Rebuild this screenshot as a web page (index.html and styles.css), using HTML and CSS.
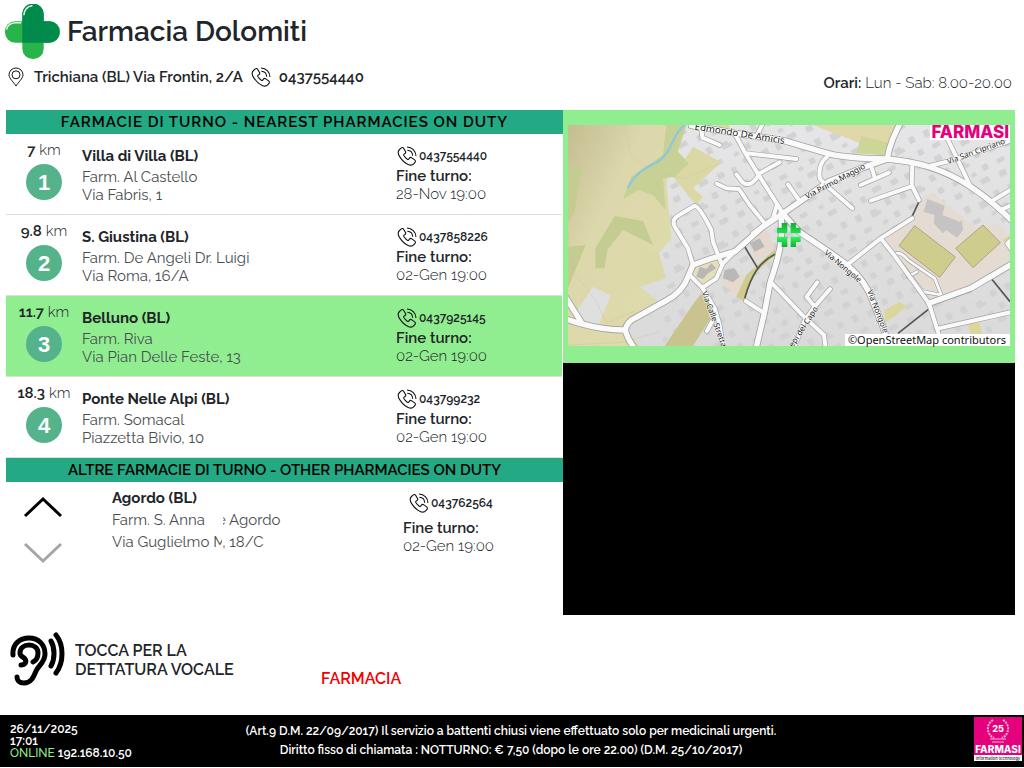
FILE: index.html
```html
<!DOCTYPE html>
<html lang="it">
<head>
    <meta charset="UTF-8">
    <meta name="viewport" content="width=device-width, initial-scale=1.0">
    <title>Farmacia Dolomiti</title>
    <link rel="stylesheet" href="styles.css">
</head>
<body>
    <!-- shared icons -->
    <svg class="sprite" aria-hidden="true">
        <symbol id="phone" viewBox="0 0 24 24">
            <path d="M5.2 2.2 L3 4.2 C.8 6.2 1 9.4 3.4 13 C6 17 9.6 20.6 13.4 22.2 C16.4 23.6 18.8 23 20.6 20.8 L21.6 19.6 C22.4 18.6 22.2 17.4 21.2 16.6 L17.8 14.2 C16.8 13.5 15.6 13.7 14.9 14.6 L14 15.8 C13.6 16.3 13 16.3 12.4 15.9 C10.6 14.6 9.2 13 8.2 11.3 C7.9 10.7 8 10.2 8.5 9.8 L9.6 9 C10.5 8.3 10.7 7.1 10 6.1 L7.9 2.8 C7.2 1.7 6 1.5 5.2 2.2 Z"/>
            <path d="M12 1.2 C18 1.4 22.6 5.8 22.8 12 M12.4 5.2 C16 5.4 18.6 8 18.8 11.6"/>
        </symbol>
    </svg>

    <header class="header">
        <div>
            <div class="brand">
                <svg class="brand-logo" viewBox="0 0 54 54" aria-hidden="true">
                    <rect x="0" y="17" width="54" height="21" rx="10" fill="#28b44b"/>
                    <rect x="17" y="0" width="21" height="54" rx="10" fill="#28b44b"/>
                    <path d="M17 38 V10 A10.5 10.5 0 0 1 38 10 V17 H43 A10.5 10.5 0 0 1 43 38 Z" fill="#008a4b"/>
                    <path d="M18.5 11 Q19 3 27 1.5 M1.5 25 Q3 19 10 18.5 H16" fill="none" stroke="#dff5e4" stroke-width="1.5"/>
                </svg>
                <h1>Farmacia Dolomiti</h1>
            </div>
            <div class="contacts">
                <svg class="pin" viewBox="0 0 16 20" aria-hidden="true">
                    <path d="M8 19 C6 15.5 1 11.5 1 7.8 A7 6.8 0 0 1 15 7.8 C15 11.5 10 15.5 8 19 Z"/>
                    <circle cx="8" cy="7.8" r="4"/>
                </svg>
                <span class="address">Trichiana (BL) Via Frontin, 2/A</span>
                <svg class="phone-icon" aria-hidden="true"><use href="#phone"/></svg>
                <a class="main-phone" href="tel:0437554440">0437554440</a>
            </div>
        </div>
        <p class="hours"><strong>Orari:</strong> Lun - Sab: 8.00-20.00</p>
    </header>

    <main class="board">
        <section class="duty">
            <h2 class="bar bar-wide">FARMACIE DI TURNO - NEAREST PHARMACIES ON DUTY</h2>
            <ol class="list">
                <li class="row">
                    <div class="distance"><span><b>7</b> km</span><span class="badge">1</span></div>
                    <div class="place">
                        <h3>Villa di Villa (BL)</h3>
                        <p>Farm. Al Castello</p>
                        <p>Via Fabris, 1</p>
                    </div>
                    <div class="shift">
                        <a class="phone" href="tel:0437554440"><svg class="phone-icon" aria-hidden="true"><use href="#phone"/></svg>0437554440</a>
                        <strong>Fine turno:</strong>
                        <span>28-Nov 19:00</span>
                    </div>
                </li>
                <li class="row">
                    <div class="distance"><span><b>9.8</b> km</span><span class="badge">2</span></div>
                    <div class="place">
                        <h3>S. Giustina (BL)</h3>
                        <p>Farm. De Angeli Dr. Luigi</p>
                        <p>Via Roma, 16/A</p>
                    </div>
                    <div class="shift">
                        <a class="phone" href="tel:0437858226"><svg class="phone-icon" aria-hidden="true"><use href="#phone"/></svg>0437858226</a>
                        <strong>Fine turno:</strong>
                        <span>02-Gen 19:00</span>
                    </div>
                </li>
                <li class="row selected">
                    <div class="distance"><span><b>11.7</b> km</span><span class="badge">3</span></div>
                    <div class="place">
                        <h3>Belluno (BL)</h3>
                        <p>Farm. Riva</p>
                        <p>Via Pian Delle Feste, 13</p>
                    </div>
                    <div class="shift">
                        <a class="phone" href="tel:0437925145"><svg class="phone-icon" aria-hidden="true"><use href="#phone"/></svg>0437925145</a>
                        <strong>Fine turno:</strong>
                        <span>02-Gen 19:00</span>
                    </div>
                </li>
                <li class="row">
                    <div class="distance"><span><b>18.3</b> km</span><span class="badge">4</span></div>
                    <div class="place">
                        <h3>Ponte Nelle Alpi (BL)</h3>
                        <p>Farm. Somacal</p>
                        <p>Piazzetta Bivio, 10</p>
                    </div>
                    <div class="shift">
                        <a class="phone" href="tel:043799232"><svg class="phone-icon" aria-hidden="true"><use href="#phone"/></svg>043799232</a>
                        <strong>Fine turno:</strong>
                        <span>02-Gen 19:00</span>
                    </div>
                </li>
            </ol>
            <h2 class="bar">ALTRE FARMACIE DI TURNO - OTHER PHARMACIES ON DUTY</h2>
            <div class="others">
                <div class="scroller">
                    <button type="button" aria-label="Precedente"><svg viewBox="0 0 40 22"><path d="M2 20 L20 3 L38 20"/></svg></button>
                    <button type="button" aria-label="Successiva" class="dim"><svg viewBox="0 0 40 22"><path d="M2 2 L20 19 L38 2"/></svg></button>
                </div>
                <div class="place">
                    <h3>Agordo (BL)</h3>
                    <p>Farm. S. Anna <span class="cut cut-start">e</span> Agordo</p>
                    <p>Via Guglielmo <span class="cut cut-end">M</span>, 18/C</p>
                </div>
                <div class="shift">
                    <a class="phone" href="tel:043762564"><svg class="phone-icon" aria-hidden="true"><use href="#phone"/></svg>043762564</a>
                    <strong>Fine turno:</strong>
                    <span>02-Gen 19:00</span>
                </div>
            </div>
        </section>

        <aside class="side">
            <div class="map">
                <svg class="map-view" viewBox="15 60 1326 663" role="img" aria-label="Mappa">
                    <defs>
                        <linearGradient id="hill" x1="0" y1="0" x2="1" y2="1">
                            <stop offset="0" stop-color="#c3bd90"/>
                            <stop offset=".35" stop-color="#dcd8ac"/>
                            <stop offset="1" stop-color="#dedbaa"/>
                        </linearGradient>
                        <linearGradient id="shade" x1="0" y1="0" x2="0" y2="1">
                            <stop offset="0" stop-color="#e6e5e7"/>
                            <stop offset="1" stop-color="#dadada"/>
                        </linearGradient>
                        <linearGradient id="cross" x1="0" y1="0" x2="0" y2="1">
                            <stop offset="0" stop-color="#0fae35"/>
                            <stop offset=".6" stop-color="#2bf457"/>
                            <stop offset="1" stop-color="#0fae35"/>
                        </linearGradient>
                        <pattern id="houses" width="150" height="130" patternUnits="userSpaceOnUse" patternTransform="rotate(-28)">
                            <path d="M8 10h22v18h-22z M54 14h16v20h-16z M98 6h28v16h-28z M14 56h18v22h-18z M62 64h22v10h8v12h-30z M116 54h18v20h-18z M20 104h24v14h-24z M82 108h16v12h-16z M122 100h18v18h-18z"/>
                        </pattern>
                        <g id="main-roads">
                            <path d="M385 62 L520 85 L663 107 L793 145 Q850 160 973 162 Q1050 170 1103 187 Q1170 210 1223 245 Q1290 290 1350 350"/>
                            <path d="M973 162 L903 187 L793 232 L725 280 L660 325 L600 365 L515 440"/>
                            <path d="M973 160 Q978 130 990 100 L1013 50"/>
                            <path d="M655 320 L708 380 L793 437 L853 480 Q910 530 930 590 L958 660 L980 730"/>
                            <path d="M655 325 L655 400 Q650 450 622 530 L605 620 L578 735"/>
                            <path d="M0 640 L50 655 Q120 675 187 675 Q190 650 220 637 L310 587 Q360 560 375 515 L390 480 L440 462 L515 440"/>
                            <path d="M187 675 Q192 700 215 730 M10 580 L55 652"/>
                            <path d="M1098 595 L1223 550 L1350 475"/>
                        </g>
                        <g id="small-roads">
                            <path d="M390 480 L375 430 L335 365 Q325 345 345 332 L395 302 Q410 305 445 375 L450 410 L475 475"/>
                            <path d="M380 510 L418 548 L460 520 L480 475 L515 440"/>
                            <path d="M418 548 L455 610 L470 660 L480 730 M455 635 L432 678"/>
                            <path d="M462 236 L490 250 L528 252 L560 300 L605 355"/>
                            <path d="M570 385 L630 340 L640 305"/>
                            <path d="M520 95 L550 150 L590 215 L660 325"/>
                            <path d="M550 145 L700 162 M650 172 L590 205 Q565 250 540 233 L520 208 M415 70 L418 98 L470 120 M585 85 L600 55"/>
                            <path d="M675 238 L708 285 M622 530 L720 632 L783 690 L788 730 M548 588 L600 622"/>
                            <path d="M1048 175 L1046 240 L1068 285 M923 287 L1043 245 M893 240 L978 203 M925 185 L935 218"/>
                            <path d="M793 155 Q765 175 770 220 L788 240 L868 310"/>
                            <path d="M858 475 L953 400 L1048 340 M953 400 L993 450 L1098 595 L1128 690 L1133 730"/>
                            <path d="M1128 670 L1350 620 M763 532 L731 575 L755 605 L801 552 M755 605 L723 650 L693 730"/>
                            <path d="M1103 182 L1160 168 L1350 105 M1153 100 L1223 245 M1283 290 L1350 250 M1310 316 L1350 298"/>
                            <path d="M1350 400 L1333 415 L1350 440"/>
                        </g>
                        <g id="lanes">
                            <path d="M993 448 Q1010 435 1035 465 L1115 520 L1135 570 L1080 560 L1010 470 M1035 515 L1062 500"/>
                        </g>
                    </defs>
                    <rect x="15" y="60" width="1326" height="663" fill="url(#shade)"/>
                    <rect x="300" y="60" width="1041" height="663" class="houses"/>
                    <path d="M15 60 H310 L345 140 L310 230 L325 400 L280 455 L230 545 L300 600 L190 670 L230 723 H15 Z" fill="url(#hill)"/>
                    <path d="M225 425 L290 450 L308 520 L230 545 Z" fill="#dcd9a9"/>
                    <path d="M90 545 L143 572 L105 665 L55 640 L40 620 Z" fill="#dfdfdf"/>
                    <path d="M390 125 L475 172 L390 250 L420 275 L400 300 L330 215 Z M500 60 L455 60 L495 80 Z" fill="#dbd8a6"/>
                    <path d="M310 60 L370 60 L345 140 L378 175 L335 215 L300 220 L308 315 L270 270 L225 255 L180 283 L205 215 L300 150 Z" fill="#c8d195"/>
                    <path d="M155 333 L240 348 L270 420 L180 375 L133 435 L125 490 L97 490 L97 430 Z M15 185 H55 L35 320 L15 350 Z M15 425 L68 420 L15 550 Z" fill="#c5cc92"/>
                    <path d="M185 62 L205 155 L270 200 L365 220 L470 175 M15 390 L30 500 L100 590 L130 655 L210 620 L270 635 M15 720 L180 712 L290 680" class="contour"/>
                    <path d="M305 723 L395 590 L420 560 L455 620 L390 723 Z" fill="#c9c390"/>
                    <path d="M365 60 C325 90 330 140 285 170 C245 190 215 205 194 250" class="stream"/>
                    <path d="M750 60 H1000 L963 150 L875 108 Z" fill="#dfd9a9"/>
                    <path d="M895 92 L980 115 L963 150 L880 145 Z" fill="#ccd697"/>
                    <path d="M388 490 L465 465 L475 510 L420 545 Z" fill="#e4e1b8"/>
                    <path d="M465 460 L500 450 L480 475 Z" fill="#cfca82"/>
                    <path d="M505 485 L545 515 L530 575 L475 535 Z M555 415 L610 370 L635 430 L580 470 Z" fill="#e5d9cf"/>
                    <path d="M520 575 L550 510 L590 475 L635 432 L638 450 L570 510 L545 590 Z" fill="#cfcb8a"/>
                    <path d="M1108 262 L1240 370 L1300 355 L1341 400 V470 L1225 548 L1110 585 L960 405 L1055 345 L1070 285 Z" fill="#e4dbd3"/>
                    <path d="M1055 362 L1177 456 L1130 517 L1008 422 Z M1260 360 L1312 413 L1230 488 L1178 430 Z" fill="#cfcd8d" stroke="#b5a184" stroke-width="3"/>
                    <path d="M1093 282 L1145 302 L1138 330 L1190 350 L1197 345 L1200 375 L1182 398 L1150 375 L1140 385 L1112 355 L1115 330 L1082 320 Z" fill="#c5c3c3"/>
                    <path d="M410 485 L430 492 L445 475 L460 490 L435 505 L420 522 L400 515 Z M485 495 L515 490 L530 515 L510 532 L480 520 Z M560 415 L590 400 L605 425 L575 440 Z" fill="#b9b8b7"/>
                    <path d="M965 615 L1010 590 L1030 605 L965 655 Z M1215 655 H1250 L1260 700 H1225 Z M1320 405 L1341 390 V430 Z" fill="#dbd69a"/>
                    <path d="M545 425 L583 488 M636 448 C590 470 565 510 545 580 M1068 290 L1047 335 M1005 685 L1100 610 M1283 518 L1341 590" class="track"/>
                    <use href="#lanes" class="lane-edge"/>
                    <use href="#lanes" class="lane"/>
                    <use href="#small-roads" class="small-edge"/>
                    <use href="#main-roads" class="main-edge"/>
                    <use href="#small-roads" class="small-road"/>
                    <use href="#main-roads" class="main-road"/>
                    <g class="street">
                        <text transform="translate(394 74) rotate(9)" class="street-large">Edmondo De Amicis</text>
                        <text transform="translate(732 283) rotate(-28)">Via Primo Maggio</text>
                        <text transform="translate(1156 178) rotate(-20)">Via San Cipriano</text>
                        <text transform="translate(782 446) rotate(40)">Via Nongole</text>
                        <text transform="translate(912 558) rotate(69)">Via Nongole</text>
                        <text transform="translate(416 562) rotate(70)">Via Calle Stretta</text>
                        <text transform="translate(690 728) rotate(-57)">epi del Capo</text>
                    </g>
                    <path d="M642 368 H656 V354 H673 V385 H642 Z M683 354 H699 V368 H713 V385 H683 Z M642 395 H673 V426 H656 V411 H642 Z M683 395 H713 V411 H699 V426 H683 Z" fill="url(#cross)"/>
                </svg>
                <span class="map-brand">FARMASI</span>
                <span class="credit">©OpenStreetMap contributors</span>
            </div>
            <div class="screen"></div>
        </aside>
    </main>

    <section class="tools">
        <button type="button" class="voice">
            <svg viewBox="0 0 56 56" aria-hidden="true">
                <path d="M3 23 C2 12 10 6 19 6 C29 6 35 13 35 22 C35 30 29 33 26 39 C23 46 21 51 14 51 C9 51 7 48 7 45"/>
                <path d="M23 30 C27 28 28 25 28 21 C28 16 24 13 19 13 C14 13 10 16 10 21 C10 25 13 24 15 27 C17 30 15 33 11 33"/>
                <path d="M41 9 C45 16 45 27 41 34 M46 3 C54 13 54 30 46 41"/>
            </svg>
            <span>TOCCA PER LA<br>DETTATURA VOCALE</span>
        </button>
        <p class="ticker">FARMACIA</p>
    </section>

    <footer class="footer">
        <p class="status">26/11/2025<br>17:01<br><span class="online">ONLINE</span> 192.168.10.50</p>
        <p class="notice">(Art.9 D.M. 22/09/2017) Il servizio a battenti chiusi viene effettuato solo per medicinali urgenti.<br>Diritto fisso di chiamata : NOTTURNO: € 7,50 (dopo le ore 22.00) (D.M. 25/10/2017)</p>
        <div class="maker">
            <svg viewBox="0 0 48 44" role="img" aria-label="Farmasi information technology">
                <rect width="48" height="38" fill="#e5007d"/>
                <rect y="38" width="48" height="6" fill="#fff"/>
                <path d="M19 3 C12 7 12 17 20 21 M29 3 C36 7 36 17 28 21" fill="none" stroke="#f7b5d8" stroke-width="2" stroke-dasharray="2 1"/>
                <path d="M16 22 H32 M18 25 H30" fill="none" stroke="#f7b5d8"/>
                <text x="24" y="15" class="years">25</text>
                <text x="24" y="36" class="maker-name">FARMASI</text>
                <text x="24" y="43" class="maker-sub">information technology</text>
            </svg>
        </div>
    </footer>
</body>
</html>
```

FILE: styles.css
```css
* {
    box-sizing: border-box;
}

body {
    font-family: Raleway, Lato, "Open Sans", sans-serif;
    font-size: 15px;
    line-height: 18px;
    color: #212529;
    background-color: #fff;
    margin: 0;
}

h1, h2, h3, p, ol {
    margin: 0;
    padding: 0;
}

h1, h2, h3, strong, b {
    font-weight: 600;
}

p {
    font-weight: 300;
}

a {
    color: inherit;
    text-decoration: none;
}

button {
    border: none;
    background: none;
    padding: 0;
    color: inherit;
    font: inherit;
    cursor: pointer;
}

.sprite {
    display: none;
}

/* Header */
.header {
    display: flex;
    justify-content: space-between;
    align-items: flex-end;
    height: 110px;
    padding: 4px 12px 18px 5px;
}

.brand {
    display: flex;
    align-items: center;
    gap: 7px;
}

.brand-logo {
    width: 55px;
    height: 55px;
}

.brand h1 {
    font-size: 28px;
    line-height: 40px;
}

.contacts {
    display: flex;
    align-items: center;
    gap: 8px;
    margin: 8px 0 5px 3px;
    font-weight: 600;
}

.pin {
    width: 16px;
    height: 20px;
    margin-right: 2px;
    fill: none;
    stroke: #111;
    stroke-width: 1;
}

.phone-icon {
    width: 20px;
    height: 20px;
    fill: none;
    stroke: #111;
    stroke-width: 1.3px;
}

/* Board */
.board {
    display: grid;
    grid-template-columns: 557fr 452fr;
    padding: 0 9px 0 6px;
}

.duty {
    font-weight: 300;
}

.bar {
    background-color: #23a983;
    color: #000;
    font-size: 15px;
    line-height: 24px;
    text-align: center;
}

.bar-wide {
    letter-spacing: 1px;
}

.list {
    list-style: none;
}

.row {
    display: grid;
    grid-template-columns: 76px 314px 1fr;
    height: 81px;
    margin-right: 1px;
    border-bottom: 1px solid #dedede;
}

.row.selected {
    background-color: #90ee90;
}

.distance {
    display: flex;
    flex-direction: column;
    align-items: center;
    gap: 5px;
    padding-top: 7px;
}

.badge {
    width: 36px;
    height: 36px;
    border-radius: 50%;
    background-color: #55b38c;
    color: #fff;
    font-family: "Liberation Sans", Arial, sans-serif;
    font-size: 22px;
    font-weight: 700;
    line-height: 37px;
    text-align: center;
}

.place {
    padding-top: 13px;
}

.place h3 {
    font-size: 15px;
    font-weight: 700;
    line-height: 18px;
    margin-bottom: 3px;
}

.place p {
    font-weight: 400;
    color: #4a4e52;
}

.shift {
    display: flex;
    flex-direction: column;
    align-items: flex-start;
    padding-top: 12px;
}

.phone {
    display: flex;
    align-items: center;
    gap: 2px;
    font-size: 12px;
    font-weight: 600;
    line-height: 20px;
    padding-left: 1px;
    margin-bottom: 1px;
}

.others {
    display: grid;
    grid-template-columns: 106px 291px 1fr;
    height: 133px;
}

.scroller {
    display: flex;
    flex-direction: column;
    align-items: flex-start;
    gap: 24px;
    padding: 14px 0 0 17px;
}

.scroller svg {
    display: block;
    width: 40px;
    height: 22px;
    fill: none;
    stroke: #000;
    stroke-width: 3;
}

.scroller .dim svg {
    stroke: #a5a5a5;
}

.others .place {
    padding-top: 7px;
    line-height: 22px;
}

.others .place h3 {
    margin-bottom: 2px;
}

.others .shift {
    padding-top: 11px;
}

.others .phone {
    padding-left: 6px;
    margin-bottom: 6px;
}

/* Half hidden letters of the scrolling name */
.cut {
    display: inline-flex;
    overflow: hidden;
    vertical-align: bottom;
}

.cut-start {
    justify-content: flex-end;
    width: 3px;
    margin-left: 14px;
}

.cut-end {
    width: 9px;
}

/* Map */
.side {
    display: flex;
    flex-direction: column;
}

.map {
    position: relative;
    padding: 15px 5px 17px;
    background-color: #90ee90;
}

.map-view {
    display: block;
    width: 100%;
}

.houses {
    fill: url(#houses);
}

#houses path {
    fill: #d3d2d3;
}

.contour {
    fill: none;
    stroke: #c8bf98;
    stroke-width: 1;
}

.stream {
    fill: none;
    stroke: #8fc8d8;
    stroke-width: 7;
}

.track {
    fill: none;
    stroke: #555;
    stroke-width: 5;
}

.main-edge, .main-road, .small-edge, .small-road, .lane-edge, .lane {
    fill: none;
    stroke-linecap: round;
    stroke-linejoin: round;
}

.main-edge, .small-edge, .lane-edge {
    stroke: #a2a2a2;
}

.main-road, .small-road, .lane {
    stroke: #fafafa;
}

.main-edge {
    stroke-width: 21;
}

.main-road {
    stroke-width: 16;
}

.small-edge {
    stroke-width: 16;
}

.small-road {
    stroke-width: 12;
}

.lane-edge {
    stroke-width: 12;
}

.lane {
    stroke-width: 8;
}

.street {
    font-family: "Noto Sans", sans-serif;
    font-size: 24px;
    font-weight: 400;
    fill: #222;
    stroke: #fff;
    stroke-width: 3;
    paint-order: stroke;
}

.street-large {
    font-size: 29px;
}

.map-brand {
    position: absolute;
    top: 15px;
    right: 5px;
    padding: 0 1px;
    background-color: #fff;
    color: #e5007d;
    font-family: Inter, sans-serif;
    font-size: 17px;
    font-weight: 800;
    line-height: 15px;
}

.credit {
    position: absolute;
    right: 5px;
    bottom: 17px;
    padding: 0 4px 0 3px;
    background-color: #fff;
    color: #111;
    font-family: "Noto Sans", sans-serif;
    font-size: 11px;
    line-height: 12px;
}

.screen {
    flex: 1;
    background-color: #000;
}

/* Voice button and ticker */
.tools {
    display: grid;
    grid-template-columns: 311px 1fr;
    height: 100px;
    padding: 17px 0 0 10px;
    font-size: 16px;
}

.voice {
    display: flex;
    align-items: flex-start;
    gap: 9px;
    font-weight: 600;
    line-height: 19px;
    text-align: left;
}

.voice span {
    padding-top: 9px;
}

.voice svg {
    width: 56px;
    height: 56px;
    fill: none;
    stroke: #000;
    stroke-width: 5;
    stroke-linecap: round;
}

.ticker {
    padding-top: 38px;
    color: #f00000;
    font-weight: 600;
}

/* Footer */
.footer {
    display: grid;
    grid-template-columns: 200px 1fr 210px;
    height: 52px;
    padding: 2px 2px 0 10px;
    background-color: #000;
    color: #fff;
    font-size: 12px;
}

.footer p {
    font-weight: 600;
}

.status {
    line-height: 12px;
    padding-top: 6px;
}

.online {
    color: #90ee90;
    font-weight: 500;
}

.notice {
    line-height: 19px;
    padding-top: 5px;
    text-align: center;
    white-space: nowrap;
}

.maker {
    display: flex;
    justify-content: flex-end;
}

.maker svg {
    width: 48px;
    height: 44px;
}

.maker text {
    font-family: Inter, sans-serif;
    font-weight: 800;
    text-anchor: middle;
    fill: #fff;
}

.maker .years {
    font-size: 9px;
}

.maker .maker-name {
    font-size: 10px;
}

.maker .maker-sub {
    font-size: 4px;
    font-weight: 500;
    fill: #222;
}
```
